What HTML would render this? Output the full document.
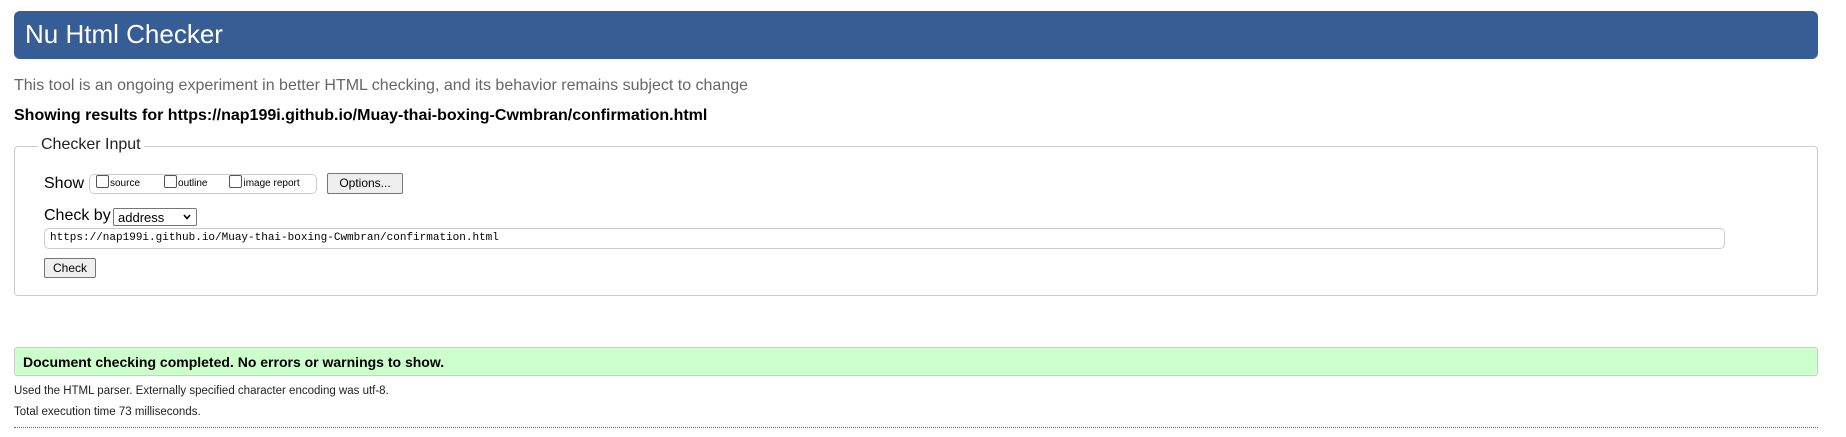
<!DOCTYPE html>
<html><head><style>
body{margin:0;width:1846px;height:437px;background:#fff;font-family:"Liberation Sans",Arial,sans-serif;position:relative;overflow:hidden;color:#000}
.a{position:absolute;white-space:nowrap}
#hd{left:14px;top:11px;width:1804px;height:48px;background:#365d95;border-radius:6px}
#hd span{position:absolute;left:11px;top:8px;color:#fff;font-size:26px}
.fs{left:14px;top:146px;width:1802px;height:148px;border:1px solid #ccc;border-radius:4px}
.lg{left:38px;top:136px;background:#fff;padding:0 3px;font-size:16px;color:#222}
.cb{display:inline-block;width:11px;height:11px;border:1px solid #555;border-radius:2px;vertical-align:-2px;margin-right:1px;background:#fff}
.btn{background:#efefef;border:1px solid #767676;border-radius:2px;font-size:12px;text-align:center;box-sizing:border-box}
</style></head><body>
<div class="a" id="hd"><span>Nu Html Checker</span></div>
<div class="a" style="left:14px;top:77px;font-size:16px;color:#666">This tool is an ongoing experiment in better HTML checking, and its behavior remains subject to change</div>
<div class="a" style="left:14px;top:107px;font-size:16px;font-weight:bold">Showing results for https://nap199i.github.io/Muay-thai-boxing-Cwmbran/confirmation.html</div>
<div class="a fs"></div>
<div class="a lg">Checker Input</div>
<div class="a" style="left:44px;top:175px;font-size:16px">Show</div>
<div class="a" style="left:89px;top:174px;width:226px;height:18px;border:1px solid #ccc;border-radius:5px;font-size:10px;line-height:18px">
<span style="margin-left:6px"><span class="cb"></span>source</span><span style="margin-left:24px"><span class="cb"></span>outline</span><span style="margin-left:22px"><span class="cb"></span>image report</span></div>
<div class="a btn" style="left:327px;top:173px;width:76px;height:21px;line-height:19px">Options...</div>
<div class="a" style="left:44px;top:207px;font-size:16px">Check by</div>
<div class="a" style="left:113px;top:208px;width:84px;height:18px;border:1px solid #767676;border-radius:2px;font-size:13px;line-height:17px;box-sizing:border-box;padding-left:4px">address<svg style="position:absolute;right:5px;top:5px" width="8" height="6" viewBox="0 0 8 6"><path d="M1 1L4 4.5L7 1" fill="none" stroke="#000" stroke-width="1.6"/></svg></div>
<div class="a" style="left:44px;top:228px;width:1681px;height:21px;border:1px solid #ccc;border-radius:5px;box-sizing:border-box;font-family:'Liberation Mono',monospace;font-size:11px;line-height:19px;padding-left:5px">https://nap199i.github.io/Muay-thai-boxing-Cwmbran/confirmation.html</div>
<div class="a btn" style="left:44px;top:258px;width:52px;height:20px;line-height:18px">Check</div>
<div class="a" style="left:14px;top:347px;width:1802px;height:27px;background:#cfc;border:1px solid #ccc;border-radius:3px"><span style="position:absolute;left:8px;top:6px;font-size:14px;font-weight:bold">Document checking completed. No errors or warnings to show.</span></div>
<div class="a" style="left:14px;top:385px;font-size:11.5px;color:#222">Used the HTML parser. Externally specified character encoding was utf-8.</div>
<div class="a" style="left:14px;top:406px;font-size:11.5px;color:#222">Total execution time 73 milliseconds.</div>
<div class="a" style="left:14px;top:427px;width:1804px;border-top:1px dotted #666"></div>
</body></html>
